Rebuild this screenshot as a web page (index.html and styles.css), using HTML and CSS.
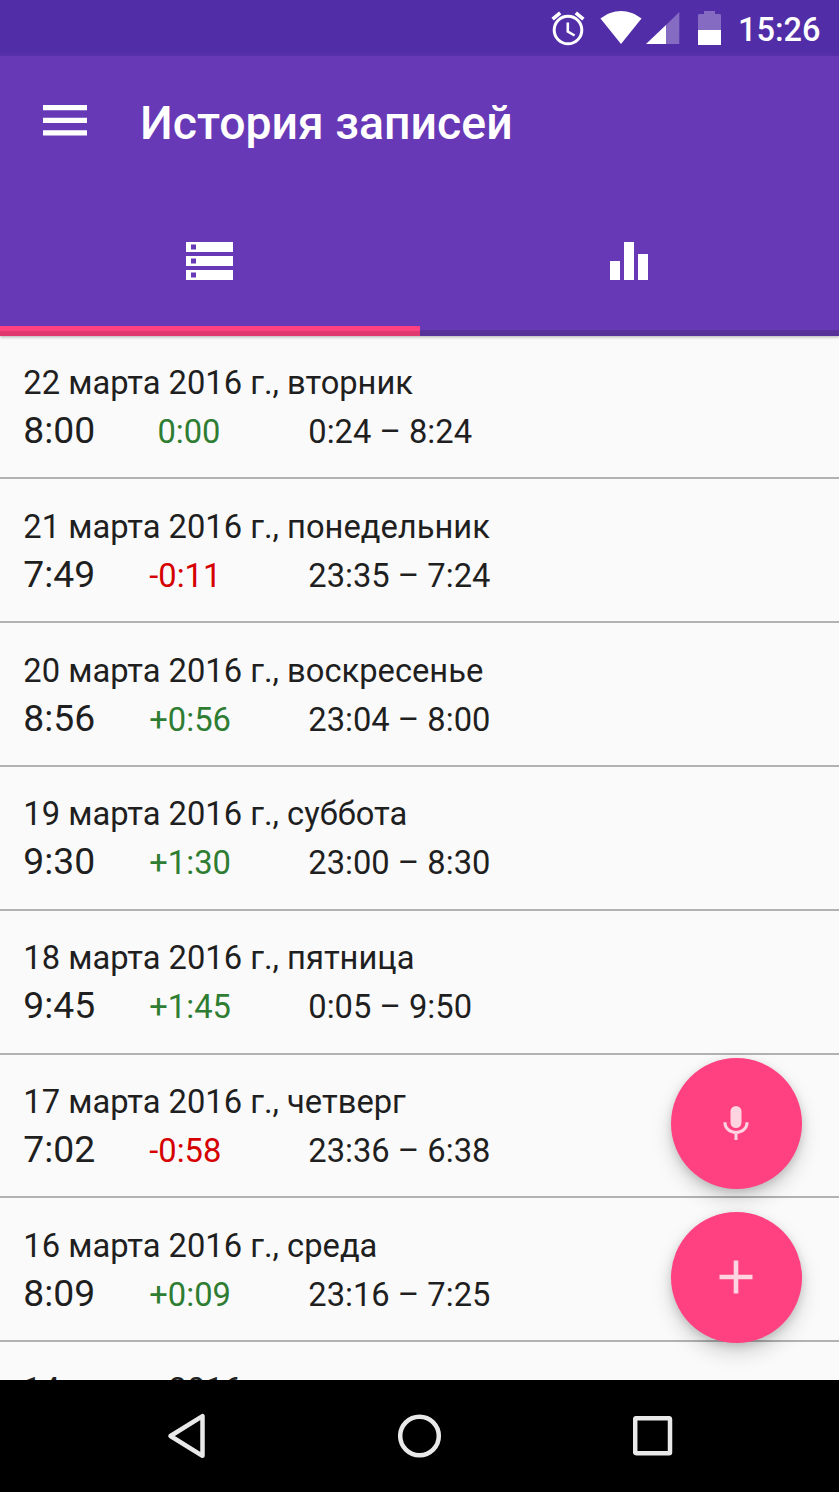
FILE: index.html
```
<!doctype html>
<html lang="ru">
<head>
<meta charset="utf-8">
<meta name="viewport" content="width=device-width, initial-scale=1">
<title>История записей</title>
<link rel="stylesheet" href="styles.css">
</head>
<body>
<div id="screen">
    <div class="status">
        <svg class="alarm" width="34" height="36" viewBox="0 0 34 36" fill="none" stroke="#fff">
            <circle cx="17" cy="19" r="13.800" stroke-width="3"/>
            <path d="M16.800 11.500v9l6.800 4" stroke-width="2.600"/>
            <path d="M1.600 8.200L9.200 1.800M24.800 1.800l7.600 6.400" stroke-width="3.600"/>
        </svg>
        <svg class="wifi" width="42" height="34" viewBox="0 0 42 34"><path fill="#fff" d="M0.500 7.600C6.500 2.800 13.500 0 21 0s14.500 2.800 20.500 7.600L21 33z"/></svg>
        <svg class="signal" width="34" height="33" viewBox="0 0 34 33">
            <path fill="#fff" fill-opacity=".3" d="M20 13L33.300 0v32H20z"/>
            <path fill="#fff" d="M0 32L20 13v19z"/>
        </svg>
        <svg class="battery" width="23" height="34" viewBox="0 0 23 34">
            <path fill="#fff" fill-opacity=".3" d="M0 19V4.400Q0 3 1.400 3H6V0h11v3h4.600Q23 3 23 4.400V19z"/>
            <path fill="#fff" d="M0 19h23v15H0z"/>
        </svg>
        <span class="clock">15:26</span>
    </div>
    <header>
        <div class="toolbar">
            <svg width="44" height="31" viewBox="0 0 44 31"><path fill="#fff" d="M0 0h44v5.300H0zM0 12.700h44V18H0zM0 25.200h44v5.300H0z"/></svg>
            <h1>История записей</h1>
        </div>
        <div class="tabs">
            <div class="tab active">
                <svg width="47" height="38" viewBox="0 0 47 38"><path fill="#fff" fill-rule="evenodd" d="M0 0h47v10H0zM5 2.500v5h5v-5zM0 14h47v10H0zM5 16.500v5h5v-5zM0 28h47v10H0zM5 30.500v5h5v-5z"/></svg>
            </div>
            <div class="tab">
                <svg width="38" height="38" viewBox="0 0 38 38"><path fill="#fff" d="M0 19h10v19H0zM14 0h10v38H14zM28 12h10v26H28z"/></svg>
            </div>
        </div>
    </header>
    <ul class="list">
        <li>
            <p class="date">22 марта 2016 г., вторник</p>
            <p class="row"><b>8:00</b><span class="diff plus">&nbsp;0:00</span><span>0:24 – 8:24</span></p>
        </li>
        <li>
            <p class="date">21 марта 2016 г., понедельник</p>
            <p class="row"><b>7:49</b><span class="diff minus">-0:11</span><span>23:35 – 7:24</span></p>
        </li>
        <li>
            <p class="date">20 марта 2016 г., воскресенье</p>
            <p class="row"><b>8:56</b><span class="diff plus">+0:56</span><span>23:04 – 8:00</span></p>
        </li>
        <li>
            <p class="date">19 марта 2016 г., суббота</p>
            <p class="row"><b>9:30</b><span class="diff plus">+1:30</span><span>23:00 – 8:30</span></p>
        </li>
        <li>
            <p class="date">18 марта 2016 г., пятница</p>
            <p class="row"><b>9:45</b><span class="diff plus">+1:45</span><span>0:05 – 9:50</span></p>
        </li>
        <li>
            <p class="date">17 марта 2016 г., четверг</p>
            <p class="row"><b>7:02</b><span class="diff minus">-0:58</span><span>23:36 – 6:38</span></p>
        </li>
        <li>
            <p class="date">16 марта 2016 г., среда</p>
            <p class="row"><b>8:09</b><span class="diff plus">+0:09</span><span>23:16 – 7:25</span></p>
        </li>
        <li>
            <p class="date">14 марта 2016</p>
        </li>
    </ul>
    <div class="fabs">
        <div class="fab">
            <svg width="26" height="34" viewBox="0 0 26 34">
                <rect x="7.500" y="0" width="11" height="22" rx="5.500" fill="#ffd4e1"/>
                <path d="M1.900 16.200c0 6.200 5 10.200 11.100 10.200s11.100-4 11.100-10.200M13 26.400V34" fill="none" stroke="#ffd4e1" stroke-width="3"/>
            </svg>
        </div>
        <div class="fab">
            <svg width="34" height="34" viewBox="0 0 34 34"><path d="M17 .5v33M.5 17h33" stroke="#ffd4e1" stroke-width="4.600"/></svg>
        </div>
    </div>
    <nav>
        <div><svg width="39" height="46" viewBox="0 0 39 46"><path d="M35.500 3.200v39.600L3.500 23z"/></svg></div>
        <div><svg width="44" height="44" viewBox="0 0 44 44"><circle cx="21.500" cy="22" r="19.300"/></svg></div>
        <div><svg width="40" height="40" viewBox="0 0 40 40"><rect x="2.200" y="2.200" width="34.800" height="35" rx="1"/></svg></div>
    </nav>
</div>
</body>
</html>
```
FILE: styles.css
```
html, body {
    margin: 0; padding: 0;
    font-family: Roboto, sans-serif;
}
#screen {
    position: relative;
    display: flex;
    flex-direction: column;
    width: 839px;
    height: 1492px;
    overflow: hidden;
    background: #fafafa;
    color: #1f1f1f;
}
svg {
    display: block;
    flex: none;
}
h1, p, ul {
    margin: 0;
    padding: 0;
}
.status {
    display: flex;
    flex: none;
    box-sizing: border-box;
    height: 56px;
    padding: 11px 19px 0 551px;
    background: linear-gradient(#512da8 53px, #5e33b0 56px);
    color: #fff;
}
.wifi {
    margin-left: 15px;
}
.signal {
    margin: 1px 0 0 4px;
}
.battery {
    margin-left: 18px;
}
.clock {
    margin: 0 0 0 17px;
    font-size: 32.5px;
    font-weight: 500;
    line-height: 38px;
}
header {
    flex: none;
    position: relative;
    height: 279.5px;
    background: #6839b6;
    box-shadow: 0 1px 3px rgba(0,0,0,.3);
}
.toolbar {
    display: flex;
    align-items: center;
    height: 131px;
    padding-left: 43px;
}
.toolbar svg {
    margin-top: -2px;
}
h1 {
    margin-left: 53px;
    color: #fff;
    font-size: 46.4px;
    font-weight: 500;
    line-height: 54px;
    padding-top: 3px;
}
.tabs {
    display: flex;
    height: 148.5px;
    background: linear-gradient(transparent 143px, rgba(0,0,0,.16) 143px);
}
.tab {
    display: flex;
    flex: 1;
    align-items: center;
    justify-content: center;
}
.tab.active {
    background: linear-gradient(transparent 139px, #ff4081 139px, #ff4081 144px, #e0396f 144px);
}
.list {
    flex: 1;
    min-height: 0;
    overflow: hidden;
}
li {
    list-style: none;
    box-sizing: border-box;
    height: 143.83px;
    padding: 27.5px 0 0 23.3px;
    border-bottom: 2px solid #b2b2b2;
}
.date {
    font-size: 32.7px;
    line-height: 40px;
}
.row {
    display: grid;
    grid-template-columns: 126px 159px auto;
    align-items: baseline;
    margin-top: 3px;
    font-size: 32.7px;
    line-height: 48px;
}
.row b {
    font-size: 37.3px;
    font-weight: normal;
}
.plus {
    color: #2e7d32;
}
.minus {
    color: #d50000;
}
.fabs {
    position: absolute;
    right: 37px;
    bottom: 149px;
}
.fab {
    display: flex;
    align-items: center;
    justify-content: center;
    width: 131px;
    height: 131px;
    margin-top: 23px;
    border-radius: 50%;
    background: #ff4081;
    box-shadow: 0 10px 20px rgba(0,0,0,.16), 0 3px 8px rgba(0,0,0,.14);
}
.fab svg {
    margin: 0 1px 2px 0;
}
nav {
    display: flex;
    flex: none;
    justify-content: center;
    height: 112px;
    background: #000;
}
nav div {
    display: flex;
    align-items: center;
    justify-content: center;
    width: 233px;
}
nav svg {
    fill: none;
    stroke: #e9e9e9;
    stroke-width: 4.5;
    stroke-linejoin: round;
}
```
